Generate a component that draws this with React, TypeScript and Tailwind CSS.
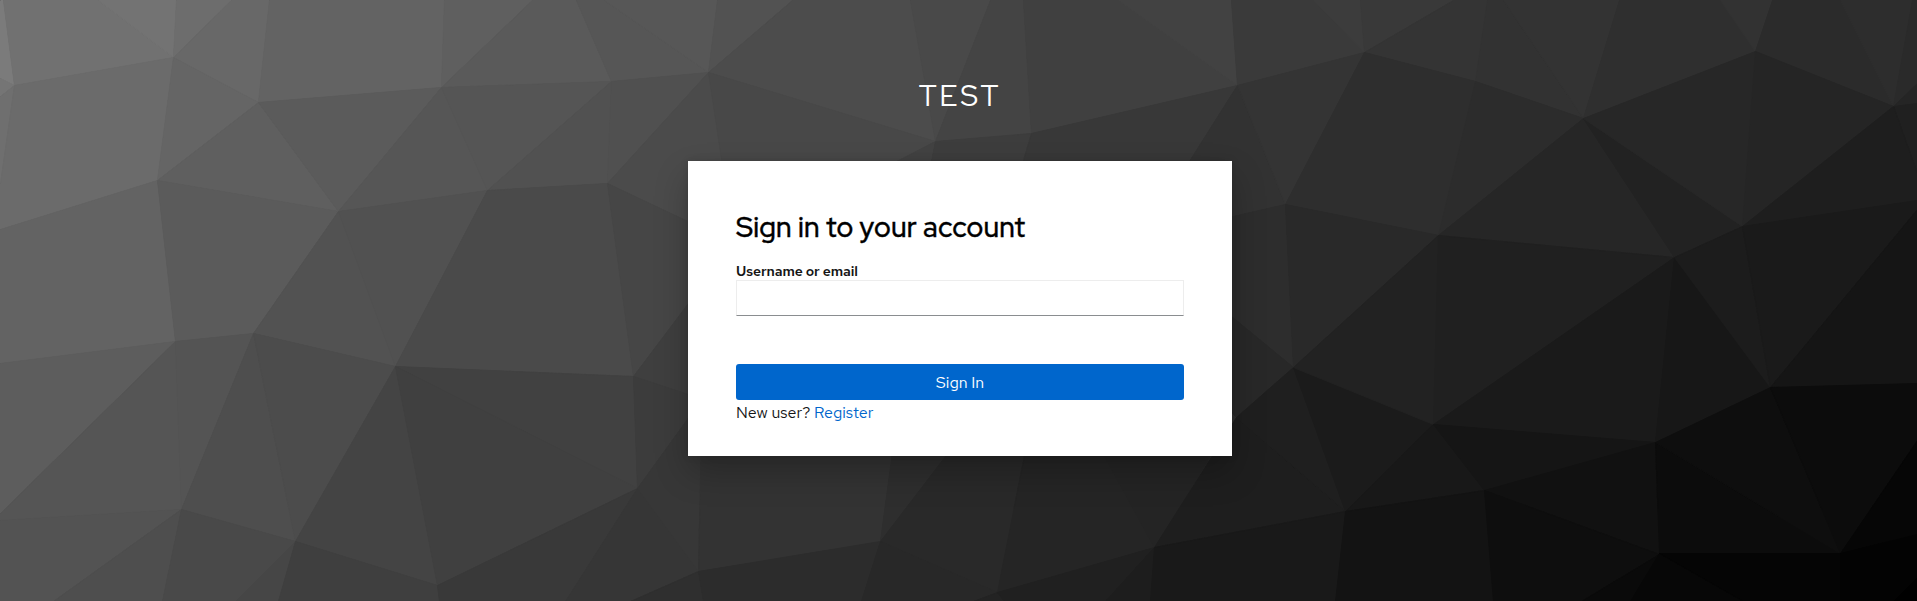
type Facet = [fill: string, points: string];

const facets: Facet[] = [
  // left column
  ['#7b7b7b', '0,0 3,0 14,85 0,78'],
  ['#757575', '0,78 14,85 0,96'],
  ['#6f6f6f', '0,96 14,85 0,183'],
  ['#717171', '3,0 98,0 173,57 14,85'],
  ['#737373', '98,0 176,0 173,57'],
  ['#6d6d6d', '176,0 231,0 173,57'],
  ['#686868', '231,0 269,0 258,102 173,57'],
  ['#6b6b6b', '14,85 173,57 157,180 0,229 0,183'],
  ['#656565', '173,57 258,102 157,180'],
  ['#636363', '269,0 444,0 441,87 258,102'],
  ['#5f5f5f', '444,0 532,0 441,87'],
  ['#5f5f5f', '258,102 338,211 157,180'],
  ['#5b5b5b', '258,102 441,87 338,211'],
  ['#636363', '0,229 157,180 175,341 0,363'],
  ['#5b5b5b', '157,180 338,211 253,333 175,341'],
  ['#565656', '441,87 487,190 338,211'],
  ['#525252', '338,211 395,366 253,333'],
  ['#515151', '338,211 487,190 395,366'],
  ['#5d5d5d', '0,363 175,341 0,513'],
  ['#555555', '0,513 175,341 181,509 0,520'],
  ['#545454', '175,341 253,333 181,509'],
  ['#4e4e4e', '253,333 295,541 181,509'],
  ['#4c4c4c', '253,333 395,366 295,541'],
  ['#535353', '0,520 181,509 53,601 0,601'],
  ['#4e4e4e', '181,509 162,601 53,601'],
  ['#494949', '181,509 295,541 235,601 162,601'],
  ['#464646', '295,541 278,601 235,601'],
  ['#444444', '395,366 437,585 295,541'],
  ['#3f3f3f', '295,541 437,585 439,601 278,601'],

  // centre left
  ['#5a5a5a', '532,0 576,0 611,81 441,87'],
  ['#565656', '576,0 604,0 708,72 611,81'],
  ['#575757', '604,0 717,0 708,72'],
  ['#525252', '717,0 792,0 708,72'],
  ['#555555', '441,87 611,81 487,190'],
  ['#515151', '611,81 607,183 487,190'],
  ['#505050', '611,81 708,72 607,183'],
  ['#4a4a4a', '487,190 607,183 633,376 395,366'],
  ['#4b4b4b', '708,72 730,220 700,227 607,183'],
  ['#464646', '607,183 700,227 700,287 633,376'],
  ['#414141', '395,366 633,376 637,488'],
  ['#404040', '395,366 637,488 437,585'],
  ['#3f3f3f', '633,376 700,287 700,398'],
  ['#3c3c3c', '633,376 700,398 700,401 637,488'],
  ['#393939', '637,488 565,601 439,601 437,585'],
  ['#363636', '637,488 698,571 630,601 565,601'],
  ['#373737', '637,488 700,401 701,440 698,571'],
  ['#2f2f2f', '698,571 703,601 630,601'],
  ['#333333', '701,430 895,430 880,541 698,571'],
  ['#2c2c2c', '698,571 880,541 861,601 703,601'],
  ['#4c4c4c', '792,0 910,0 935,141 708,72'],
  ['#484848', '708,72 935,141 840,191 726,191'],
  ['#424242', '935,141 925,191 838,191'],

  // centre
  ['#494949', '910,0 990,0 935,141'],
  ['#444444', '990,0 1023,0 1031,133 935,141'],
  ['#404040', '1023,0 1118,0 1237,85 1031,133'],
  ['#424242', '1118,0 1231,0 1237,85'],
  ['#3d3d3d', '935,141 1031,133 1014,191 925,191'],
  ['#383838', '1031,133 1237,85 1170,191 1014,191'],
  ['#3a3a3a', '1231,0 1313,0 1364,52 1237,85'],
  ['#3c3c3c', '1313,0 1360,0 1364,52'],
  ['#393939', '1360,0 1453,0 1364,52'],
  ['#343434', '1453,0 1487,0 1475,81 1364,52'],
  ['#323232', '1237,85 1285,204 1220,219 1170,191'],
  ['#343434', '1237,85 1364,52 1285,204'],
  ['#2e2e2e', '1364,52 1475,81 1438,235 1285,204'],
  ['#2d2d2d', '1285,204 1293,367 1220,307 1220,219'],
  ['#292929', '1285,204 1438,235 1293,367'],
  ['#282828', '1220,307 1293,367 1236,417 1220,400'],
  ['#2e2e2e', '895,430 970,435 880,541'],
  ['#292929', '965,430 1029,430 997,592 880,541'],
  ['#282828', '880,541 997,592 973,601 861,601'],
  ['#232323', '997,592 1004,601 973,601'],
  ['#252525', '1029,430 1090,430 1154,547 997,592'],
  ['#242424', '1090,430 1226,430 1154,547'],
  ['#202020', '997,592 1154,547 1105,601 1004,601'],
  ['#1d1d1d', '1154,547 1150,601 1105,601'],
  ['#1e1e1e', '1236,417 1345,511 1154,547'],
  ['#1f1f1f', '1293,367 1345,511 1236,417'],
  ['#1b1b1b', '1293,367 1433,424 1345,511'],
  ['#191919', '1154,547 1345,511 1335,601 1150,601'],

  // right
  ['#323232', '1487,0 1503,0 1583,118 1475,81'],
  ['#333333', '1503,0 1619,0 1583,118'],
  ['#2f2f2f', '1619,0 1720,0 1755,51 1583,118'],
  ['#323232', '1720,0 1772,0 1755,51'],
  ['#2b2b2b', '1772,0 1840,0 1893,106 1755,51'],
  ['#2d2d2d', '1840,0 1912,0 1893,106'],
  ['#2a2a2a', '1912,0 1917,0 1917,83 1893,106'],
  ['#252525', '1893,106 1917,83 1917,103'],
  ['#202020', '1893,106 1917,103 1917,173'],
  ['#2c2c2c', '1475,81 1583,118 1438,235'],
  ['#262626', '1583,118 1674,257 1438,235'],
  ['#222222', '1583,118 1742,226 1674,257'],
  ['#272727', '1583,118 1755,51 1742,226'],
  ['#252525', '1755,51 1893,106 1742,226'],
  ['#1e1e1e', '1893,106 1917,173 1917,200 1742,226'],
  ['#222222', '1438,235 1433,424 1293,367'],
  ['#202020', '1438,235 1674,257 1433,424'],
  ['#1a1a1a', '1674,257 1655,442 1433,424'],
  ['#171717', '1674,257 1770,387 1655,442'],
  ['#1c1c1c', '1742,226 1770,387 1674,257'],
  ['#1a1a1a', '1742,226 1917,200 1917,209 1770,387'],
  ['#151515', '1917,209 1917,383 1770,387'],
  ['#181818', '1433,424 1484,490 1345,511'],
  ['#151515', '1433,424 1655,442 1484,490'],
  ['#131313', '1345,511 1484,490 1493,601 1335,601'],
  ['#111111', '1484,490 1655,442 1659,554'],
  ['#0e0e0e', '1484,490 1659,554 1581,601 1493,601'],
  ['#0a0a0a', '1659,554 1630,601 1581,601'],
  ['#0c0c0c', '1655,442 1840,553 1659,553'],
  ['#0e0e0e', '1655,442 1770,387 1840,553'],
  ['#0c0c0c', '1770,387 1917,383 1917,440 1840,553'],
  ['#070707', '1659,553 1743,601 1630,601'],
  ['#050505', '1659,553 1840,553 1840,601 1743,601'],
  ['#060606', '1840,553 1917,440 1917,534'],
  ['#030303', '1840,553 1917,534 1917,577 1893,601 1840,601'],
  ['#000000', '1917,577 1917,601 1893,601'],
];

function Backdrop() {
  return (
    <svg
      className="absolute inset-0 h-full w-full"
      viewBox="0 0 1917 601"
      preserveAspectRatio="xMidYMid slice"
      aria-hidden="true"
    >
      <g transform="translate(0.5 0.5)">
        {facets.map(([fill, points]) => (
          <polygon key={points} points={points} fill={fill} stroke={fill} strokeWidth={1} />
        ))}
      </g>
    </svg>
  );
}

export default function App() {
  return (
    <div className="relative h-[601px] w-full overflow-hidden bg-[#303030] font-['Red_Hat_Text',Inter,sans-serif] text-[#151515]">
      <Backdrop />
      <div className="relative flex flex-col items-center pl-[3px]">
        <header className="flex h-[161px] items-center pt-[30px]">
          <div className="font-['Red_Hat_Display','Red_Hat_Text',Inter,sans-serif] text-[29px] leading-10 font-normal tracking-[3px] text-white uppercase">
            Test
          </div>
        </header>
        <main className="h-[295px] w-[544px] bg-white px-12 pt-[48px] shadow-[0_16px_32px_0_rgba(3,3,3,0.24),0_0_8px_0_rgba(3,3,3,0.12)]">
          <h1 className="font-['Red_Hat_Display','Red_Hat_Text',Inter,sans-serif] text-[28px] leading-9 font-medium tracking-[0.21px] whitespace-nowrap text-black [-webkit-text-stroke:0.35px_#000]">
            Sign in to your account
          </h1>
          <form className="flex flex-col pt-[17px]" onSubmit={(e) => e.preventDefault()}>
            <label htmlFor="username" className="h-[18px] text-sm leading-[18px] font-semibold tracking-[-0.1px]">
              Username or email
            </label>
            <input
              id="username"
              type="text"
              className="h-9 border border-[#ededed] border-b-[#8a8d90] bg-white px-2 text-base outline-none"
            />
            <button
              type="submit"
              className="mt-12 h-9 rounded-[3px] bg-[#0066cc] pt-px text-base leading-6 text-white"
            >
              Sign In
            </button>
          </form>
          <p className="pt-px text-base leading-6">
            New user?{' '}
            <a href="#" className="text-[#0066cc]">
              Register
            </a>
          </p>
        </main>
      </div>
    </div>
  );
}
